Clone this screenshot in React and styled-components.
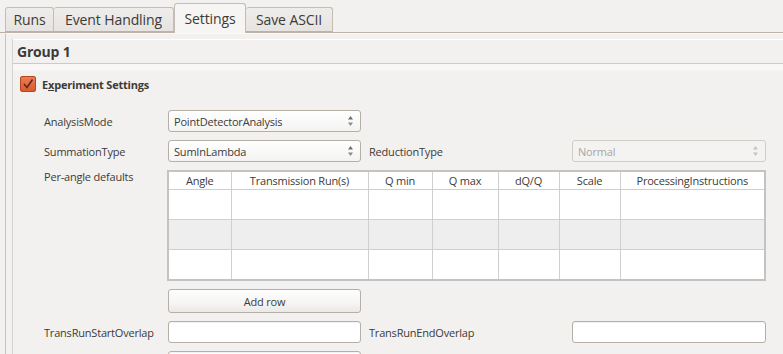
import React from 'react'
import styled, { createGlobalStyle } from 'styled-components'

const GlobalStyle = createGlobalStyle`
	html, body {
		margin: 0;
		padding: 0;
		background: #f2f1f0;
		font-family: 'Open Sans', 'Noto Sans', sans-serif;
		color: #3c3b37;
		overflow: hidden;
	}
`

const Window = styled.div`
	width: 783px;
	height: 354px;
	overflow: hidden;
	padding-top: 3px;
	box-sizing: border-box;
`

const TabBar = styled.div`
	display: flex;
	align-items: flex-end;
	padding-left: 5px;
	height: 29px;
	border-bottom: 1px solid #bbb3aa;
	position: relative;
	z-index: 1;
`

const Tab = styled.div`
	height: ${(p) => (p.active ? '30px' : '25px')};
	margin-bottom: ${(p) => (p.active ? '-1px' : '0')};
	padding: 0 0 1px;
	display: flex;
	align-items: center;
	justify-content: center;
	box-sizing: border-box;
	font-size: 14px;
	letter-spacing: -0.1px;
	border: 1px solid #c4bdb5;
	border-bottom: ${(p) => (p.active ? 'none' : '1px solid #bbb3aa')};
	border-left: ${(p) => (p.first || p.active ? '1px solid #c4bdb5' : 'none')};
	border-radius: 3px 3px 0 0;
	background: ${(p) =>
		p.active ? '#f6f5f4' : 'linear-gradient(#efedeb, #e6e3e0)'};
	color: #3c3b37;
	width: ${(p) => p.w}px;
`

const Pane = styled.div`
	margin-left: 5px;
	border-left: 1px solid #c9c3bc;
	border-top: 1px solid #fbfaf9;
	height: 330px;
	padding: 5px 0 0 6px;
	box-sizing: border-box;
`

const Group = styled.div`
	border-left: 1px solid #d6d2ce;
	height: 100%;
`

const GroupTitle = styled.div`
	height: 23px;
	border-top: 1px solid #ffffff;
	border-bottom: 1px solid #cdcac7;
	display: flex;
	align-items: center;
	padding-left: 4px;
	font-size: 14px;
	font-weight: 700;
	letter-spacing: -0.2px;
	color: #3c3b37;
`

const GroupBody = styled.div`
	background: linear-gradient(#f8f7f6 0px, #f8f7f6 6px, #f2f1f0 7px);
	padding: 12px 0 0 7px;
`

const CheckRow = styled.label`
	display: flex;
	align-items: center;
	gap: 6px;
	font-size: 11px;
	font-weight: 700;
	letter-spacing: -0.2px;
	height: 16px;
`

const Check = styled.span`
	width: 14px;
	height: 14px;
	border-radius: 2px;
	background: linear-gradient(#ec7c52, #dc5a30);
	border: 1px solid #b3461f;
	display: flex;
	align-items: center;
	justify-content: center;
`

const Mnemonic = styled.span`
	text-decoration: underline;
`

const Form = styled.div`
	display: grid;
	grid-template-columns: 124px 193px 211px 194px;
	row-gap: 8px;
	margin: 18px 0 0 24px;
	font-size: 11px;
	letter-spacing: -0.2px;
`

const Label = styled.div`
	display: flex;
	align-items: ${(p) => (p.top ? 'flex-start' : 'center')};
	padding-left: ${(p) => (p.inset ? '8px' : '0')};
	height: ${(p) => (p.top ? 'auto' : '22px')};
	margin-top: ${(p) => (p.top ? '-1px' : '0')};
	color: #3c3b37;
`

const Combo = styled.div`
	height: 22px;
	box-sizing: border-box;
	border: 1px solid ${(p) => (p.disabled ? '#d2ccc6' : '#b6afa7')};
	border-radius: 3px;
	background: ${(p) =>
		p.disabled ? '#f4f3f2' : 'linear-gradient(#ffffff, #f4f3f2)'};
	color: ${(p) => (p.disabled ? '#a9a6a2' : '#3c3b37')};
	display: flex;
	align-items: center;
	justify-content: space-between;
	padding: 0 6px 0 5px;
`

const Spin = ({ faded }) => (
	<svg width="7" height="14" viewBox="0 0 7 14">
		<path d="M3.5 2 L6 5.5 H1 Z" fill={faded ? '#c8c3be' : '#6e6a66'} />
		<path d="M3.5 12 L6 8.5 H1 Z" fill={faded ? '#c8c3be' : '#8e8a86'} />
	</svg>
)

const TableWrap = styled.div`
	grid-column: 2 / 5;
	min-width: 0;
	width: 599px;
	margin-left: -1px;
	border: 2px solid #c3c3c3;
	background: #ffffff;
	height: 111px;
	box-sizing: border-box;
	overflow: hidden;
`

const Table = styled.table`
	border-collapse: collapse;
	table-layout: fixed;
	width: 595px;
`

const Th = styled.th`
	font-weight: 400;
	height: 17px;
	line-height: 17px;
	padding: 0;
	border-right: 1px solid #cfcfcf;
	border-bottom: 1px solid #cfcfcf;
	text-align: center;
	color: #3c3b37;
	background: #ffffff;
	white-space: nowrap;
	&:last-child {
		border-right: none;
	}
`

const Td = styled.td`
	height: 29px;
	padding: 0;
	border-right: 1px solid #cfcfcf;
	border-bottom: 1px solid #cfcfcf;
	background: ${(p) => (p.alt ? '#eeeeee' : '#ffffff')};
	&:last-child {
		border-right: none;
	}
	tr:last-child & {
		border-bottom: none;
	}
`

const Button = styled.div`
	height: 24px;
	box-sizing: border-box;
	border: 1px solid #b6afa7;
	border-radius: 3px;
	background: linear-gradient(#fdfdfd, #f6f5f4 60%, #ebe9e7);
	display: flex;
	align-items: center;
	justify-content: center;
	color: #3c3b37;
`

const Input = styled.div`
	height: 22px;
	box-sizing: border-box;
	border: 1px solid #b6afa7;
	border-radius: 3px;
	background: #ffffff;
	box-shadow: inset 0 1px 1px rgba(0, 0, 0, 0.06);
`

const columns = [
	{ name: 'Angle', w: 62 },
	{ name: 'Transmission Run(s)', w: 137 },
	{ name: 'Q min', w: 64 },
	{ name: 'Q max', w: 66 },
	{ name: 'dQ/Q', w: 61 },
	{ name: 'Scale', w: 61 },
	{ name: 'ProcessingInstructions', w: 144 }
]

const tabs = [
	{ name: 'Runs', w: 49 },
	{ name: 'Event Handling', w: 120 },
	{ name: 'Settings', w: 72, active: true },
	{ name: 'Save ASCII', w: 87 }
]

const App = () => (
	<Window>
		<GlobalStyle />
		<TabBar>
			{tabs.map((t, i) => (
				<Tab key={t.name} active={t.active} first={i === 0} w={t.w}>
					{t.name}
				</Tab>
			))}
		</TabBar>
		<Pane>
			<Group>
				<GroupTitle>Group 1</GroupTitle>
				<GroupBody>
					<CheckRow>
						<Check>
							<svg width="12" height="12" viewBox="0 0 12 12">
								<path
									d="M2 6 L5 9.5 L10.5 1.5"
									fill="none"
									stroke="#5a2a18"
									strokeWidth="1.6"
								/>
							</svg>
						</Check>
						<span>
							E<Mnemonic>x</Mnemonic>periment Settings
						</span>
					</CheckRow>
					<Form>
						<Label>AnalysisMode</Label>
						<Combo>
							PointDetectorAnalysis
							<Spin />
						</Combo>
						<div />
						<div />

						<Label>SummationType</Label>
						<Combo>
							SumInLambda
							<Spin />
						</Combo>
						<Label inset>ReductionType</Label>
						<Combo disabled>
							Normal
							<Spin faded />
						</Combo>

						<Label top>Per-angle defaults</Label>
						<TableWrap>
							<Table>
								<colgroup>
									{columns.map((c) => (
										<col key={c.name} style={{ width: c.w }} />
									))}
								</colgroup>
								<thead>
									<tr>
										{columns.map((c) => (
											<Th key={c.name}>{c.name}</Th>
										))}
									</tr>
								</thead>
								<tbody>
									{[0, 1, 2].map((r) => (
										<tr key={r}>
											{columns.map((c) => (
												<Td key={c.name} alt={r === 1} />
											))}
										</tr>
									))}
								</tbody>
							</Table>
						</TableWrap>

						<div />
						<Button>Add row</Button>
						<div />
						<div />

						<Label>TransRunStartOverlap</Label>
						<Input />
						<Label inset>TransRunEndOverlap</Label>
						<Input />

						<div />
						<Input />
						<div />
						<div />
					</Form>
				</GroupBody>
			</Group>
		</Pane>
	</Window>
)

export default App
